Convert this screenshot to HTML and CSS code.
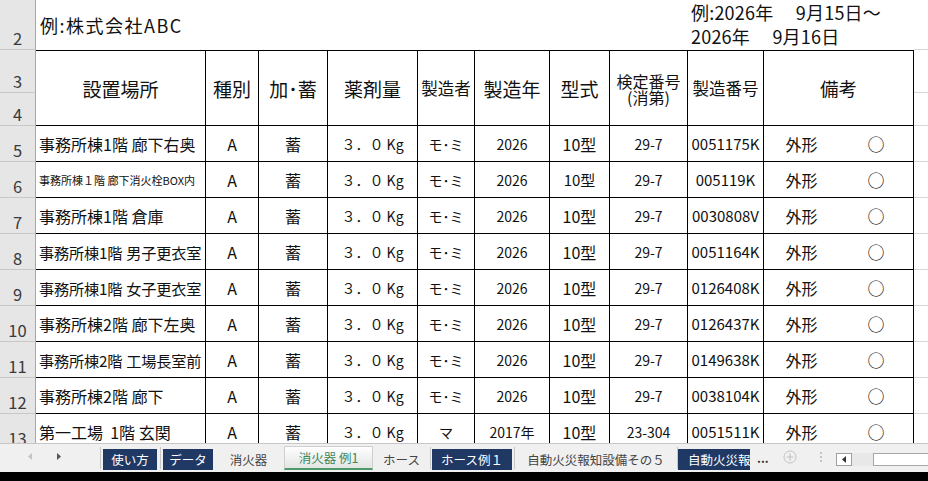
FILE: index.html
```html
<!DOCTYPE html>
<html lang="ja">
<head>
<meta charset="utf-8">
<title>消火器 例1</title>
<link rel="stylesheet" href="styles.css">
</head>
<body>
<div class="screen">
  <div class="sheet">
    <div class="grid">
      <div class="rh r-top">2</div>
      <div class="title r-top">例:株式会社ABC</div>
      <div class="date r-top">例:2026年 　9月15日～
2026年 　9月16日</div>
      <div class="ext r-top"></div>

      <div class="rh r3">3</div>
      <div class="cell hd">設置場所</div>
      <div class="cell hd">種別</div>
      <div class="cell hd">加･蓄</div>
      <div class="cell hd">薬剤量</div>
      <div class="cell hd sm">製造者</div>
      <div class="cell hd">製造年</div>
      <div class="cell hd">型式</div>
      <div class="cell hd sm two"><span class="ln">検定番号</span><span class="ln">(消第)</span></div>
      <div class="cell hd sm">製造番号</div>
      <div class="cell hd wide">備考</div>
      <div class="ext r3 c-ext"></div>
      <div class="rh r4">4</div>
      <div class="ext r4 c-ext"></div>

      <div class="rh">5</div>
      <div class="cell place">事務所棟1階 廊下右奥</div>
      <div class="cell t16">A</div><div class="cell t16">蓄</div>
      <div class="cell qty">３．０ Kg</div><div class="cell maker">モ･ミ</div>
      <div class="cell num">2026</div><div class="cell t16">10型</div>
      <div class="cell num">29-7</div><div class="cell serial">0051175K</div>
      <div class="cell t16 nb">外形</div><div class="cell mark">○</div>
      <div class="ext"></div>

      <div class="rh">6</div>
      <div class="cell place small">事務所棟１階 廊下消火栓BOX内</div>
      <div class="cell t16">A</div><div class="cell t16">蓄</div>
      <div class="cell qty">３．０ Kg</div><div class="cell maker">モ･ミ</div>
      <div class="cell num">2026</div><div class="cell t15">10型</div>
      <div class="cell num">29-7</div><div class="cell serial">005119K</div>
      <div class="cell t16 nb">外形</div><div class="cell mark">○</div>
      <div class="ext"></div>

      <div class="rh">7</div>
      <div class="cell place">事務所棟1階 倉庫</div>
      <div class="cell t16">A</div><div class="cell t16">蓄</div>
      <div class="cell qty">３．０ Kg</div><div class="cell maker">モ･ミ</div>
      <div class="cell num">2026</div><div class="cell t16">10型</div>
      <div class="cell num">29-7</div><div class="cell serial">0030808V</div>
      <div class="cell t16 nb">外形</div><div class="cell mark">○</div>
      <div class="ext"></div>

      <div class="rh">8</div>
      <div class="cell place tight">事務所棟1階 男子更衣室</div>
      <div class="cell t16">A</div><div class="cell t16">蓄</div>
      <div class="cell qty">３．０ Kg</div><div class="cell maker">モ･ミ</div>
      <div class="cell num">2026</div><div class="cell t16">10型</div>
      <div class="cell num">29-7</div><div class="cell serial">0051164K</div>
      <div class="cell t16 nb">外形</div><div class="cell mark">○</div>
      <div class="ext"></div>

      <div class="rh">9</div>
      <div class="cell place tight">事務所棟1階 女子更衣室</div>
      <div class="cell t16">A</div><div class="cell t16">蓄</div>
      <div class="cell qty">３．０ Kg</div><div class="cell maker">モ･ミ</div>
      <div class="cell num">2026</div><div class="cell t16">10型</div>
      <div class="cell num">29-7</div><div class="cell serial">0126408K</div>
      <div class="cell t16 nb">外形</div><div class="cell mark">○</div>
      <div class="ext"></div>

      <div class="rh">10</div>
      <div class="cell place">事務所棟2階 廊下左奥</div>
      <div class="cell t16">A</div><div class="cell t16">蓄</div>
      <div class="cell qty">３．０ Kg</div><div class="cell maker">モ･ミ</div>
      <div class="cell num">2026</div><div class="cell t16">10型</div>
      <div class="cell num">29-7</div><div class="cell serial">0126437K</div>
      <div class="cell t16 nb">外形</div><div class="cell mark">○</div>
      <div class="ext"></div>

      <div class="rh">11</div>
      <div class="cell place tight">事務所棟2階 工場長室前</div>
      <div class="cell t16">A</div><div class="cell t16">蓄</div>
      <div class="cell qty">３．０ Kg</div><div class="cell maker">モ･ミ</div>
      <div class="cell num">2026</div><div class="cell t16">10型</div>
      <div class="cell num">29-7</div><div class="cell serial">0149638K</div>
      <div class="cell t16 nb">外形</div><div class="cell mark">○</div>
      <div class="ext"></div>

      <div class="rh">12</div>
      <div class="cell place">事務所棟2階 廊下</div>
      <div class="cell t16">A</div><div class="cell t16">蓄</div>
      <div class="cell qty">３．０ Kg</div><div class="cell maker">モ･ミ</div>
      <div class="cell num">2026</div><div class="cell t16">10型</div>
      <div class="cell num">29-7</div><div class="cell serial">0038104K</div>
      <div class="cell t16 nb">外形</div><div class="cell mark">○</div>
      <div class="ext"></div>

      <div class="rh">13</div>
      <div class="cell place">第一工場&nbsp; 1階 玄関</div>
      <div class="cell t16">A</div><div class="cell t16">蓄</div>
      <div class="cell qty">３．０ Kg</div><div class="cell maker">マ</div>
      <div class="cell num">2017年</div><div class="cell t16">10型</div>
      <div class="cell num">23-304</div><div class="cell serial">0051511K</div>
      <div class="cell t16 nb">外形</div><div class="cell mark">○</div>
      <div class="ext"></div>
    </div>
  </div>

  <div class="tabs">
    <div class="nav">
      <svg class="arr-l" width="4" height="7" viewBox="0 0 4 7"><path d="M4 0 L0 3.5 L4 7 Z" fill="#c4c4c4"/></svg>
      <svg class="arr-r" width="4" height="7" viewBox="0 0 4 7"><path d="M0 0 L4 3.5 L0 7 Z" fill="#555"/></svg>
    </div>
    <div class="sep s1"></div>
    <div class="tab navy w-usage">使い方</div>
    <div class="sep s2"></div>
    <div class="tab navy w-data">データ</div>
    <div class="tab w-ext">消火器</div>
    <div class="tab active w-act">消火器 例1</div>
    <div class="tab w-hose">ホース</div>
    <div class="sep s3"></div>
    <div class="tab navy w-hose1">ホース例１</div>
    <div class="sep s4"></div>
    <div class="tab w-fire">自動火災報知設備その５</div>
    <div class="sep"></div>
    <div class="tab navy trunc w-trunc">自動火災報</div>
    <div class="more">...</div>
    <svg class="plus" width="14" height="14" viewBox="0 0 14 14"><circle cx="7" cy="7" r="6" fill="none" stroke="#c4c4c4" stroke-width="1"/><path d="M7 3.5 V10.5 M3.5 7 H10.5" stroke="#c4c4c4" stroke-width="1.2"/></svg>
    <svg class="vdots" width="4" height="12" viewBox="0 0 4 12"><rect x="1" y="1" width="2" height="2" fill="#c4c4c4"/><rect x="1" y="5" width="2" height="2" fill="#c4c4c4"/><rect x="1" y="9" width="2" height="2" fill="#c4c4c4"/></svg>
    <div class="sbtn"><svg width="4" height="7" viewBox="0 0 4 7"><path d="M4 0 L0 3.5 L4 7 Z" fill="#333"/></svg></div>
    <div class="strack"></div>
    <div class="sbox"></div>
  </div>
  <div class="bottom"></div>
</div>
</body>
</html>
```

FILE: styles.css
```css
* { box-sizing: border-box; }

body {
  margin: 0;
  background: #fff;
  color: #111;
  font-family: "Noto Sans CJK JP", "Noto Sans", sans-serif;
}

.screen {
  width: 928px;
  height: 481px;
  overflow: hidden;
  display: flex;
  flex-direction: column;
}

.sheet {
  flex: none;
  height: 443px;
  overflow: hidden;
}

.grid {
  display: grid;
  grid-template-columns: 36px 170px 53px 69px 90px 57px 75px 60px 78px 76px 75px 75px 14px;
  grid-template-rows: 50px 43px 33px repeat(9, 36px);
}

/* row headers */
.rh {
  grid-column: 1;
  background: #e6e6e6;
  border-right: 1px solid #a8a8a8;
  border-bottom: 1px solid #c8c8c8;
  color: #3a3a3a;
  font-size: 16.5px;
  line-height: 1;
  display: flex;
  justify-content: center;
  align-items: flex-end;
  padding-bottom: 3px;
}

.r-top { grid-row: 1; }
.r3 { grid-row: 2; }
.r4 { grid-row: 3; }
.c-ext { grid-column: 13; }

/* row 2 texts */
.title {
  grid-column: 2 / span 8;
  padding: 12px 0 0 4px;
  font-size: 18px;
  letter-spacing: 1.5px;
  white-space: nowrap;
}

.date {
  grid-column: 10 / span 3;
  padding: 0 0 0 3px;
  font-size: 18px;
  line-height: 24px;
  letter-spacing: 0.2px;
  white-space: pre;
}

.ext {
  border-bottom: 1px solid #d6d6d6;
}

/* table cells */
.cell {
  border-right: 1px solid #000;
  border-bottom: 1px solid #000;
  display: flex;
  align-items: center;
  justify-content: center;
  overflow: hidden;
  white-space: nowrap;
}

.hd {
  grid-row: 2 / span 2;
  border-top: 1px solid #000;
  font-size: 19px;
}

.hd.sm { font-size: 16.5px; }
.hd.two {
  flex-direction: column;
  font-size: 16px;
  padding-top: 1px;
}
.hd.two .ln {
  display: block;
  height: 16px;
  line-height: 16px;
}

.hd.wide { grid-column: span 2; font-size: 18.5px; }

.place {
  justify-content: flex-start;
  padding-left: 3px;
  font-size: 16px;
}
.place.tight { font-size: 15.2px; letter-spacing: -0.2px; word-spacing: 1px; }
.place.small { font-size: 11px; }

.t16 { font-size: 16px; }
.t15 { font-size: 15px; }
.qty { font-size: 14px; }
.maker { font-size: 14px; }
.num { font-size: 14px; }
.serial { font-size: 15px; }
.mark { font-size: 17px; }
.nb { border-right: none; }

/* sheet tabs */
.tabs {
  flex: none;
  height: 29px;
  background: #f0f0f0;
  border-top: 1px solid #c6c6c6;
  display: flex;
  align-items: flex-start;
  font-size: 12.5px;
  color: #444;
}

.nav {
  flex: none;
  width: 100px;
  height: 25px;
  display: flex;
  align-items: center;
}
.arr-l { margin-left: 28px; }
.arr-r { margin-left: 25px; }

.sep {
  flex: none;
  width: 1px;
  height: 22px;
  margin-top: 3px;
  background: #c8c8c8;
}
.s1 { margin-right: 2px; }
.s2 { margin: 3px 2px 0 3px; }
.s3 { margin-right: 1px; }
.s4 { margin-left: 2px; }

.tab {
  flex: none;
  height: 21px;
  margin-top: 5px;
  display: flex;
  align-items: center;
  justify-content: center;
  white-space: nowrap;
  overflow: hidden;
}
.tab.navy {
  background: #1f3864;
  color: #fff;
}
.tab.active {
  height: 24px;
  margin-top: 2px;
  background: linear-gradient(#fefefe, #e3e6e4);
  border: 1px solid #cfcfcf;
  border-bottom: 2px solid #4f9a6b;
  color: #3f8759;
}
.tab.trunc {
  justify-content: flex-start;
  padding-left: 10px;
}

.w-usage { width: 54px; }
.w-data { width: 50px; }
.w-ext { width: 71px; }
.w-act { width: 89px; }
.w-hose { width: 57px; }
.w-hose1 { width: 80px; }
.w-fire { width: 162px; }
.w-trunc { width: 72px; }

.more {
  flex: none;
  width: 13px;
  margin: 5px 0 0 7px;
  font-weight: bold;
  color: #333;
  font-size: 12px;
  line-height: 18px;
}
.plus { flex: none; margin: 6px 0 0 13px; }
.vdots { flex: none; margin: 7px 0 0 22px; }

.sbtn {
  flex: none;
  width: 16px;
  height: 13px;
  margin: 9px 0 0 13px;
  border: 1px solid #9f9f9f;
  background: #fff;
  display: flex;
  align-items: center;
  justify-content: center;
}
.strack {
  flex: none;
  width: 21px;
  height: 13px;
  margin-top: 9px;
  background: #e8e8e8;
}
.sbox {
  flex: 1;
  height: 13px;
  margin-top: 9px;
  border: 1px solid #a8a8a8;
  border-right: none;
  background: #fff;
}

.bottom {
  flex: none;
  height: 9px;
  background: #000;
}
```
